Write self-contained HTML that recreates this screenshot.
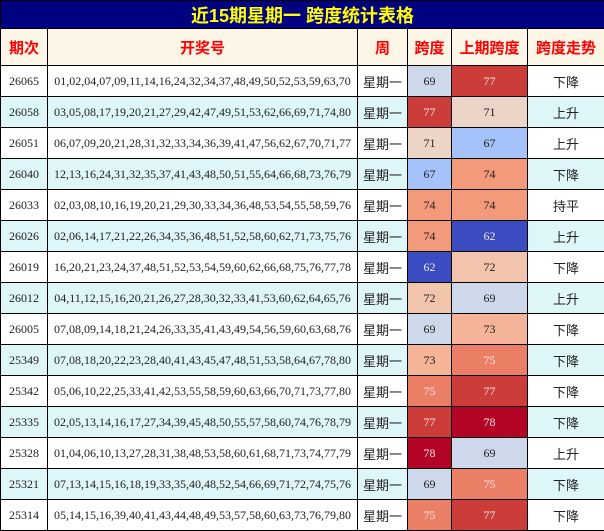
<!DOCTYPE html>
<html><head><meta charset="utf-8"><style>
body{margin:0;width:604px;height:531px;overflow:hidden;background:#fff;font-family:"Liberation Serif","Noto Serif CJK SC",serif}
table{border-collapse:collapse;table-layout:fixed;width:604px;position:absolute;left:0;top:0}
td{border:1px solid #000;text-align:center;padding:0;font-size:12px;color:#222;height:30px;white-space:nowrap;overflow:hidden}
.t td{background:#000080;color:#ff0;font-weight:bold;font-size:18px;height:27px;font-family:"Liberation Sans","Noto Sans CJK SC",sans-serif}
.h td{background:#fdf5e6;color:#f00;font-weight:bold;font-size:15px;height:36px;font-family:"Liberation Sans","Noto Sans CJK SC",sans-serif}
.z td{background:#dff6f8}
.cn{font-family:"Liberation Sans","Noto Sans CJK SC",sans-serif;font-size:13px}
.w{color:#f2e8e8}
</style></head><body>
<table>
<colgroup><col style="width:47px"><col style="width:310px"><col style="width:50px"><col style="width:44px"><col style="width:76px"><col style="width:77px"></colgroup>
<tr class="t"><td colspan="6">近15期星期一 跨度统计表格</td></tr>
<tr class="h"><td>期次</td><td>开奖号</td><td>周</td><td>跨度</td><td>上期跨度</td><td>跨度走势</td></tr>
<tr><td>26065</td><td>01,02,04,07,09,11,14,16,24,32,34,37,48,49,50,52,53,59,63,70</td><td class="cn">星期一</td><td style="background:#cdd9ea">69</td><td class="w" style="background:#cc3c39">77</td><td class="cn">下降</td></tr>
<tr class="z"><td>26058</td><td>03,05,08,17,19,20,21,27,29,42,47,49,51,53,62,66,69,71,74,80</td><td class="cn">星期一</td><td class="w" style="background:#cc3c39">77</td><td style="background:#ecd4c7">71</td><td class="cn">上升</td></tr>
<tr><td>26051</td><td>06,07,09,20,21,28,31,32,33,34,36,39,41,47,56,62,67,70,71,77</td><td class="cn">星期一</td><td style="background:#ecd4c7">71</td><td style="background:#a5c3fa">67</td><td class="cn">上升</td></tr>
<tr class="z"><td>26040</td><td>12,13,16,24,31,32,35,37,41,43,48,50,51,55,64,66,68,73,76,79</td><td class="cn">星期一</td><td style="background:#a5c3fa">67</td><td style="background:#f39a7a">74</td><td class="cn">下降</td></tr>
<tr><td>26033</td><td>02,03,08,10,16,19,20,21,29,30,33,34,36,48,53,54,55,58,59,76</td><td class="cn">星期一</td><td style="background:#f39a7a">74</td><td style="background:#f39a7a">74</td><td class="cn">持平</td></tr>
<tr class="z"><td>26026</td><td>02,06,14,17,21,22,26,34,35,36,48,51,52,58,60,62,71,73,75,76</td><td class="cn">星期一</td><td style="background:#f39a7a">74</td><td class="w" style="background:#3b4cc0">62</td><td class="cn">上升</td></tr>
<tr><td>26019</td><td>16,20,21,23,24,37,48,51,52,53,54,59,60,62,66,68,75,76,77,78</td><td class="cn">星期一</td><td class="w" style="background:#3b4cc0">62</td><td style="background:#f2c4ac">72</td><td class="cn">下降</td></tr>
<tr class="z"><td>26012</td><td>04,11,12,15,16,20,21,26,27,28,30,32,33,41,53,60,62,64,65,76</td><td class="cn">星期一</td><td style="background:#f2c4ac">72</td><td style="background:#cdd9ea">69</td><td class="cn">上升</td></tr>
<tr><td>26005</td><td>07,08,09,14,18,21,24,26,33,35,41,43,49,54,56,59,60,63,68,76</td><td class="cn">星期一</td><td style="background:#cdd9ea">69</td><td style="background:#f5b497">73</td><td class="cn">下降</td></tr>
<tr class="z"><td>25349</td><td>07,08,18,20,22,23,28,40,41,43,45,47,48,51,53,58,64,67,78,80</td><td class="cn">星期一</td><td style="background:#f5b497">73</td><td class="w" style="background:#ea7f65">75</td><td class="cn">下降</td></tr>
<tr><td>25342</td><td>05,06,10,22,25,33,41,42,53,55,58,59,60,63,66,70,71,73,77,80</td><td class="cn">星期一</td><td class="w" style="background:#ea7f65">75</td><td class="w" style="background:#cc3c39">77</td><td class="cn">下降</td></tr>
<tr class="z"><td>25335</td><td>02,05,13,14,16,17,27,34,39,45,48,50,55,57,58,60,74,76,78,79</td><td class="cn">星期一</td><td class="w" style="background:#cc3c39">77</td><td class="w" style="background:#b40426">78</td><td class="cn">下降</td></tr>
<tr><td>25328</td><td>01,04,06,10,13,27,28,31,38,48,53,58,60,61,68,71,73,74,77,79</td><td class="cn">星期一</td><td class="w" style="background:#b40426">78</td><td style="background:#cdd9ea">69</td><td class="cn">上升</td></tr>
<tr class="z"><td>25321</td><td>07,13,14,15,16,18,19,33,35,40,48,52,54,66,69,71,72,74,75,76</td><td class="cn">星期一</td><td style="background:#cdd9ea">69</td><td class="w" style="background:#ea7f65">75</td><td class="cn">下降</td></tr>
<tr><td>25314</td><td>05,14,15,16,39,40,41,43,44,48,49,53,57,58,60,63,73,76,79,80</td><td class="cn">星期一</td><td class="w" style="background:#ea7f65">75</td><td class="w" style="background:#cc3c39">77</td><td class="cn">下降</td></tr>
</table>
</body></html>
